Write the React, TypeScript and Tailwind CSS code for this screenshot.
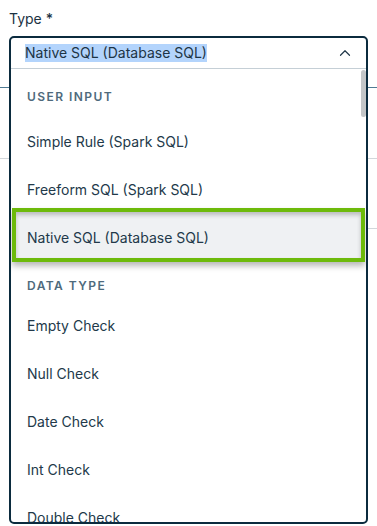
import { ChevronUp } from "lucide-react";

type Option = { kind: "header" | "item"; label: string; selected?: boolean };

const options: Option[] = [
  { kind: "header", label: "User input" },
  { kind: "item", label: "Simple Rule (Spark SQL)" },
  { kind: "item", label: "Freeform SQL (Spark SQL)" },
  { kind: "item", label: "Native SQL (Database SQL)", selected: true },
  { kind: "header", label: "Data type" },
  { kind: "item", label: "Empty Check" },
  { kind: "item", label: "Null Check" },
  { kind: "item", label: "Date Check" },
  { kind: "item", label: "Int Check" },
  { kind: "item", label: "Double Check" },
];

function OptionRow({ option, index }: { option: Option; index: number }) {
  if (option.kind === "header") {
    return (
      <div
        className={
          index === 0
            ? "flex h-[48px] items-start pt-[19px] pl-[16px]"
            : "flex h-[40px] items-start pt-[16px] pl-[16px]"
        }
      >
        <span className="text-[12px] leading-[18px] font-semibold uppercase tracking-[0.12em] text-[#4e6a7c]">
          {option.label}
        </span>
      </div>
    );
  }

  if (option.selected) {
    return (
      <div className="relative z-10 mx-[1px] -mt-[5px] -mb-[1px] flex h-[54px] items-center border-4 border-[#6dba0b] bg-[#eff1f3] pt-[4px] pl-[11px] shadow-[0_4px_6px_rgba(0,0,0,0.28),inset_0_3px_4px_rgba(0,0,0,0.22)]">
        <span className="text-[14px] text-[#22394a]">{option.label}</span>
      </div>
    );
  }

  return (
    <div className="flex h-[48px] items-center pl-[16px]">
      <span className="text-[14px] text-[#22394a]">{option.label}</span>
    </div>
  );
}

export default function App() {
  return (
    <div
      className="relative h-[526px] w-[377px] overflow-hidden bg-white"
      style={{ fontFamily: "Inter, 'Liberation Sans', sans-serif" }}
    >
      <div className="px-[9px] pt-[9px]">
        <p className="text-[14px] leading-[20px] text-[#1b3243]">
          Type <span className="font-medium">*</span>
        </p>
      </div>

      {/* page content underneath the open menu */}
      <div className="mt-[58px] h-px w-full bg-[#4f7a93]" />
      <div className="mt-[70px] h-px w-full bg-[#d2d7db]" />
      <div className="mt-[69px] ml-auto h-px w-[140px] bg-[#d2d7db]" />

      <div className="absolute top-[36px] left-[9px] flex h-[488px] w-[359px] flex-col overflow-hidden rounded-[5px] border-2 border-[#0b2b3e] bg-white">
        <div className="flex h-[31px] shrink-0 items-center justify-between border-b border-[#c5cfd6] pr-[12px] pl-[14px]">
          <span className="bg-[#b3d4fc] text-[14px] leading-[18px] text-[#1d3445]">
            Native SQL (Database SQL)
          </span>
          <ChevronUp size={18} strokeWidth={1.6} className="text-[#22394a]" />
        </div>

        <div className="relative flex-1 overflow-hidden">
          <div className="absolute top-[1px] right-0 h-[47px] w-[5px] rounded-full bg-[#c3c6c8]" />
          {options.map((option, i) => (
            <OptionRow key={option.label} option={option} index={i} />
          ))}
        </div>
      </div>
    </div>
  );
}
